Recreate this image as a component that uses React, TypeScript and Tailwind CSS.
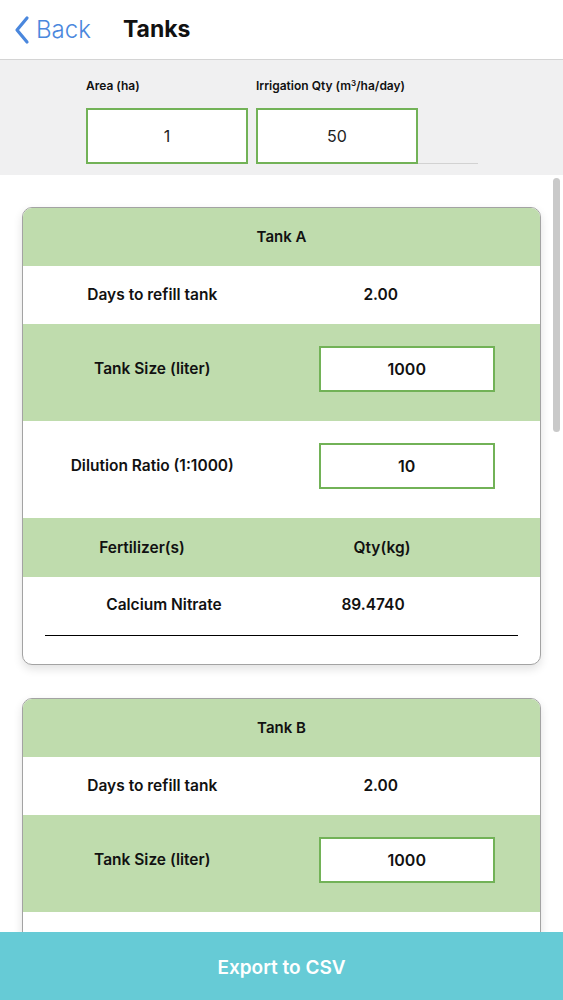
import React from "react";

const font = { fontFamily: "Inter, 'Noto Sans', sans-serif" };

type Row = { kind: "text" | "input"; label: string; value: string; green: boolean };

const TankCard = ({ name, rows, fertilizers }: { name: string; rows: Row[]; fertilizers?: { name: string; qty: string }[] }) => {
  return (
    <div className="shrink-0 mx-[22px] rounded-[10px] border border-[#a3a3a3] bg-white shadow-[0_4px_10px_rgba(0,0,0,0.12)] overflow-hidden">
      {/* card title */}
      <div className="h-[58px] bg-[#bfdcad] flex items-center justify-center text-[15px] font-semibold text-[#111]">
        {name}
      </div>

      {rows.map((row) => (
        <div
          key={row.label}
          className={`flex items-center ${row.green ? "bg-[#bfdcad]" : "bg-white"} ${row.kind === "input" ? "h-[97px] pb-[7px]" : "h-[58px]"}`}
        >
          <div className="w-1/2 text-center text-[15.5px] font-semibold text-[#111]">{row.label}</div>
          <div className="w-1/2 flex justify-center">
            {row.kind === "input" ? (
              <div className="ml-[-8px] w-[176px] h-[46px] border-2 border-[#72b257] bg-white flex items-center justify-center text-[16px] font-semibold text-[#111]">
                {row.value}
              </div>
            ) : (
              <span className="ml-[-60px] text-[15.5px] font-semibold text-[#111]">{row.value}</span>
            )}
          </div>
        </div>
      ))}

      {fertilizers && (
        <>
          <div className="h-[59px] bg-[#bfdcad] flex items-center text-[15.5px] font-semibold text-[#111]">
            <div className="w-[238px] text-center">Fertilizer(s)</div>
            <div className="w-[242px] text-center">Qty(kg)</div>
          </div>
          <div className="px-[22px] pb-[28px]">
            <div className="h-[59px] pb-[2px] flex items-center border-b border-black text-[15.5px] font-semibold text-[#111]">
              <div className="w-[238px] text-center">{fertilizers[0].name}</div>
              <div className="w-[180px] text-center">{fertilizers[0].qty}</div>
            </div>
          </div>
        </>
      )}
    </div>
  );
};

const tankRows: Row[] = [
  { kind: "text", label: "Days to refill tank", value: "2.00", green: false },
  { kind: "input", label: "Tank Size (liter)", value: "1000", green: true },
  { kind: "input", label: "Dilution Ratio (1:1000)", value: "10", green: false },
];

export default function App() {
  return (
    <div className="h-[1000px] flex flex-col bg-white overflow-hidden" style={font}>
      {/* nav bar */}
      <div className="h-[60px] shrink-0 flex items-center border-b border-[#d4d4d4] bg-white">
        <div className="flex items-center pl-[12px] text-[#4a87dd]">
          <svg width="20" height="30" viewBox="0 0 20 30" fill="none">
            <path d="M15 3 L5 15 L15 27" stroke="#4a87dd" strokeWidth="3.2" strokeLinecap="round" strokeLinejoin="round" />
          </svg>
          <span className="ml-[4px] text-[24px] font-light">Back</span>
        </div>
        <span className="ml-[32px] text-[23px] font-bold text-[#111]">Tanks</span>
      </div>

      {/* area / irrigation inputs */}
      <div className="h-[115px] shrink-0 bg-[#f0f0f1] flex gap-[8px] pl-[86px] pt-[17px]">
        <div className="flex flex-col">
          <span className="text-[12px] font-semibold text-[#111] h-[31px]">Area (ha)</span>
          <div className="w-[162px] h-[56px] border-2 border-[#72b257] bg-white flex items-center justify-center text-[16px] text-[#222]">
            1
          </div>
        </div>
        <div className="flex flex-col">
          <span className="text-[12px] font-semibold text-[#111] h-[31px]">
            Irrigation Qty (m<sup className="text-[8px]">3</sup>/ha/day)
          </span>
          <div className="flex items-end">
            <div className="w-[162px] h-[56px] border-2 border-[#72b257] bg-white flex items-center justify-center text-[16px] text-[#222]">
              50
            </div>
            <div className="w-[60px] h-px bg-[#d2d2d2]" />
          </div>
        </div>
      </div>

      {/* scrolling list of tanks */}
      <div className="relative flex-1 overflow-hidden pt-[32px] flex flex-col gap-[33px]">
        <TankCard name="Tank A" rows={tankRows} fertilizers={[{ name: "Calcium Nitrate", qty: "89.4740" }]} />
        <TankCard name="Tank B" rows={tankRows} />
        <div className="absolute right-[3px] top-[3px] w-[7px] h-[254px] rounded-full bg-[#c9c9c9]" />
      </div>

      <button className="h-[68px] shrink-0 pt-[5px] bg-[#66cbd6] text-white text-[19px] font-semibold">Export to CSV</button>
    </div>
  );
}
